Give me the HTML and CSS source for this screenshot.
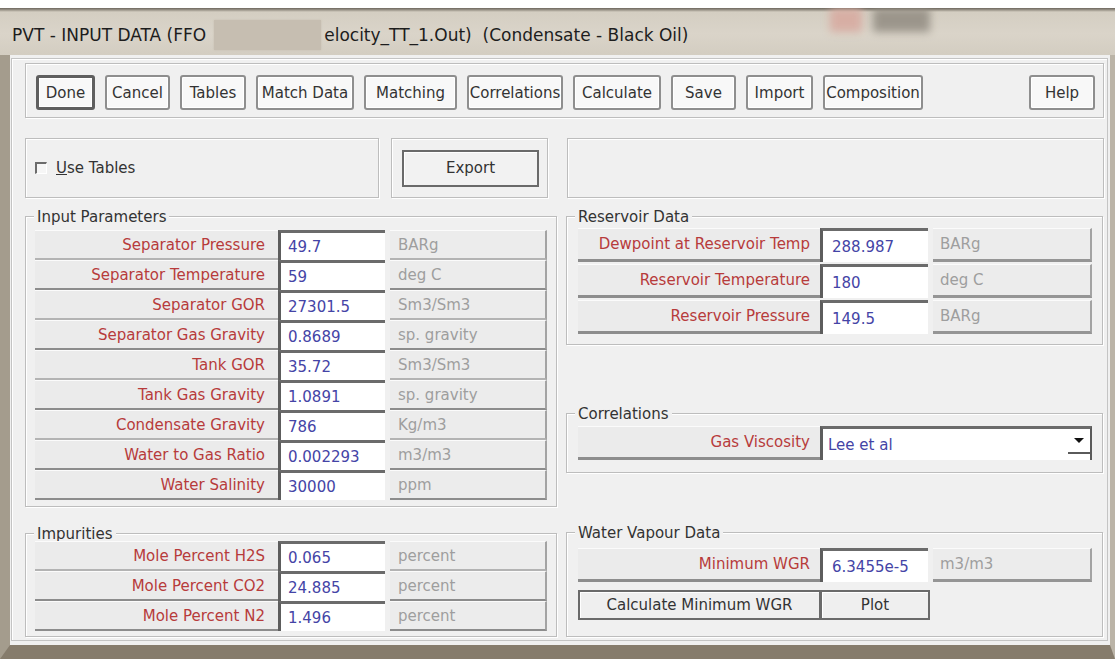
FILE: index.html
```html
<!DOCTYPE html>
<html lang="en">
<head>
<meta charset="utf-8">
<title>PVT - INPUT DATA</title>
<link rel="stylesheet" href="styles.css">
</head>
<body>
<div class="window">
  <div class="titlebar">
    <span class="title-text">PVT - INPUT DATA (FFO</span>
    <span class="title-mask"></span>
    <span class="title-text title-rest">elocity_TT_1.Out)&nbsp; (Condensate - Black Oil)</span>
    <span class="caption-btn caption-min"></span>
    <span class="caption-btn caption-max"></span>
  </div>

  <div class="client">
    <div class="frame">

      <div class="toolbar etched">
        <button class="tbtn tbtn-default">Done</button>
        <button class="tbtn">Cancel</button>
        <button class="tbtn">Tables</button>
        <button class="tbtn">Match Data</button>
        <button class="tbtn">Matching</button>
        <button class="tbtn">Correlations</button>
        <button class="tbtn">Calculate</button>
        <button class="tbtn">Save</button>
        <button class="tbtn">Import</button>
        <button class="tbtn">Composition</button>
        <span class="toolbar-fill"></span>
        <button class="tbtn">Help</button>
      </div>

      <div class="toprow">
        <div class="etched box-tables">
          <span class="checkbox"></span>
          <span class="check-label"><u>U</u>se Tables</span>
        </div>
        <div class="etched box-export">
          <button class="btn-export">Export</button>
        </div>
        <div class="etched box-blank"></div>
      </div>

      <div class="columns">
        <div class="col">
          <section class="group etched group-left group-input">
            <div class="legend">Input Parameters</div>
            <div class="rows">
              <div class="row"><div class="lbl">Separator Pressure</div><div class="val">49.7</div><div class="unit">BARg</div></div>
              <div class="row"><div class="lbl">Separator Temperature</div><div class="val">59</div><div class="unit">deg C</div></div>
              <div class="row"><div class="lbl">Separator GOR</div><div class="val">27301.5</div><div class="unit">Sm3/Sm3</div></div>
              <div class="row"><div class="lbl">Separator Gas Gravity</div><div class="val">0.8689</div><div class="unit">sp. gravity</div></div>
              <div class="row"><div class="lbl">Tank GOR</div><div class="val">35.72</div><div class="unit">Sm3/Sm3</div></div>
              <div class="row"><div class="lbl">Tank Gas Gravity</div><div class="val">1.0891</div><div class="unit">sp. gravity</div></div>
              <div class="row"><div class="lbl">Condensate Gravity</div><div class="val">786</div><div class="unit">Kg/m3</div></div>
              <div class="row"><div class="lbl">Water to Gas Ratio</div><div class="val">0.002293</div><div class="unit">m3/m3</div></div>
              <div class="row"><div class="lbl">Water Salinity</div><div class="val">30000</div><div class="unit">ppm</div></div>
            </div>
          </section>

          <section class="group etched group-left group-imp">
            <div class="legend">Impurities</div>
            <div class="rows">
              <div class="row"><div class="lbl">Mole Percent H2S</div><div class="val">0.065</div><div class="unit">percent</div></div>
              <div class="row"><div class="lbl">Mole Percent CO2</div><div class="val">24.885</div><div class="unit">percent</div></div>
              <div class="row"><div class="lbl">Mole Percent N2</div><div class="val">1.496</div><div class="unit">percent</div></div>
            </div>
          </section>
        </div>

        <div class="col">
          <section class="group etched group-right group-res">
            <div class="legend">Reservoir Data</div>
            <div class="rows rows-tall">
              <div class="row"><div class="lbl">Dewpoint at Reservoir Temp</div><div class="val">288.987</div><div class="unit">BARg</div></div>
              <div class="row"><div class="lbl">Reservoir Temperature</div><div class="val">180</div><div class="unit">deg C</div></div>
              <div class="row"><div class="lbl">Reservoir Pressure</div><div class="val">149.5</div><div class="unit">BARg</div></div>
            </div>
          </section>

          <section class="group etched group-right group-corr">
            <div class="legend">Correlations</div>
            <div class="row row-combo">
              <div class="lbl">Gas Viscosity</div>
              <div class="combo">
                <span class="combo-text">Lee et al</span>
                <span class="combo-btn"><span class="arrow"></span></span>
              </div>
            </div>
          </section>

          <section class="group etched group-right group-wv">
            <div class="legend">Water Vapour Data</div>
            <div class="rows rows-tall">
              <div class="row"><div class="lbl">Minimum WGR</div><div class="val">6.3455e-5</div><div class="unit">m3/m3</div></div>
            </div>
            <div class="wv-actions">
              <button class="pbtn">Calculate Minimum WGR</button>
              <button class="pbtn pbtn-plot">Plot</button>
            </div>
          </section>
        </div>
      </div>

    </div>
  </div>
</div>
</body>
</html>
```

FILE: styles.css
```css
* {
  box-sizing: border-box;
}

body {
  margin: 0;
  background: #ffffff;
  font-family: "DejaVu Sans", "Liberation Sans", sans-serif;
  font-size: 15px;
  color: #333333;
}

button {
  font: inherit;
  cursor: default;
}

.window {
  width: 1115px;
  padding-top: 8px;
}

/* ---------- caption bar ---------- */
.titlebar {
  height: 47px;
  display: flex;
  align-items: flex-start;
  padding-left: 12px;
  background: linear-gradient(#6d675d 0, #9c968b 2px, #d4cec2 4px, #dad4c9 55%, #d3cdc1 100%);
  color: #1d1d1d;
  font-size: 17px;
  overflow: hidden;
}

.title-text {
  margin-top: 17px;
  line-height: 20px;
  white-space: nowrap;
}

.title-mask {
  width: 107px;
  height: 30px;
  margin: 12px 3px 0 8px;
  background: #c6beb1;
  box-shadow: 0 0 2px #c6beb1;
}

.caption-btn {
  height: 24px;
  filter: blur(4px);
  opacity: 0.8;
}

.caption-min {
  width: 32px;
  margin-left: auto;
  background: #d8a69c;
}

.caption-max {
  width: 57px;
  margin-left: 11px;
  margin-right: 185px;
  background: #8d877d;
}

/* ---------- client area ---------- */
.client {
  height: 604px;
  display: flex;
  flex-direction: column;
  padding: 3px 2px 4px 1px;
  background: #f0f0f0;
  border-left: 10px solid #a49c8d;
  border-right: 5px solid #bbb4a7;
  border-bottom: 14px solid #867c6c;
}

.frame {
  flex: 1;
  padding: 4px 3px 0 13px;
  border: 1px solid #c4c4c4;
  box-shadow: inset 1px 1px 0 #ffffff;
}

.etched {
  border: 1px solid #bdbdbd;
  box-shadow: inset 1px 1px 0 #ffffff, 1px 1px 0 #ffffff;
}

/* ---------- command buttons ---------- */
.toolbar {
  height: 55px;
  display: grid;
  grid-template-columns: 59px 65px 66px 98px 93px 96px 88px 65px 67px 100px 1fr 66px;
  column-gap: 10px;
  align-items: start;
  padding: 11px 8px 0 10px;
}

.tbtn {
  height: 35px;
  padding: 0;
  border: 2px solid #8e8e8e;
  border-radius: 3px;
  background: #f8f8f8;
  box-shadow: inset 0 0 0 1px #ffffff;
  color: #333333;
  white-space: nowrap;
}

.tbtn-default {
  border: 3px solid #5f5f5f;
}

.toprow {
  display: flex;
  height: 60px;
  margin-top: 20px;
}

.box-tables {
  width: 354px;
  display: flex;
  align-items: center;
  padding-left: 9px;
  margin-right: 12px;
}

.checkbox {
  width: 12px;
  height: 12px;
  margin-right: 9px;
  border-top: 2px solid #6c6c6c;
  border-left: 2px solid #6c6c6c;
  border-bottom: 1px solid #ffffff;
  border-right: 1px solid #ffffff;
  background: #f6f6f6;
}

.check-label {
  color: #333333;
}

.box-export {
  width: 157px;
  display: flex;
  align-items: center;
  padding-left: 10px;
}

.btn-export {
  width: 137px;
  height: 37px;
  padding: 0;
  border: 2px solid #6a6a6a;
  background: #f2f2f2;
  box-shadow: inset 1px 1px 0 #ffffff;
  color: #333333;
}

.box-blank {
  width: 537px;
  margin-left: auto;
}

/* ---------- data groups ---------- */
.columns {
  display: grid;
  grid-template-columns: 532px 537px;
  column-gap: 9px;
  margin-top: 18px;
}

.col {
  display: flex;
  flex-direction: column;
}

.group-left {
  padding: 0 9px 6px 9px;
}

.group-right {
  padding: 0 10px 10px 11px;
}

.legend {
  width: max-content;
  height: 14px;
  line-height: 14px;
  margin-top: -7px;
  padding: 0 3px;
  background: #f0f0f0;
  color: #333333;
}

.group-left .legend {
  margin-left: -1px;
}

.group-right .legend {
  margin-left: -3px;
}

.group-input .rows {
  margin-top: 6px;
}

.group-imp {
  margin-top: 26px;
  padding-bottom: 5px;
}

.group-res .rows {
  margin-top: 4px;
}

.group-corr {
  margin-top: 68px;
  padding-bottom: 12px;
}

.group-wv {
  margin-top: 59px;
  padding-bottom: 16px;
}

.group-wv .rows {
  margin-top: 8px;
}

.rows {
  display: flex;
  flex-direction: column;
}

.rows-tall {
  gap: 2px;
}

.row {
  display: grid;
  height: 30px;
}

.group-left .row {
  grid-template-columns: 243px 107px 1fr;
}

.group-right .row {
  grid-template-columns: 242px 108px 1fr;
}

.rows-tall .row {
  height: 34px;
}

.lbl {
  display: flex;
  align-items: center;
  justify-content: flex-end;
  padding-right: 13px;
  background: #ebebeb;
  border-top: 1px solid #fbfbfb;
  border-bottom: 2px solid #b3b3b3;
  color: #b73b3b;
  white-space: nowrap;
}

.group-right .lbl {
  padding-right: 10px;
  border-bottom: 3px solid #8d8d8d;
}

.val {
  display: flex;
  align-items: center;
  padding-left: 7px;
  background: #ffffff;
  border-top: 3px solid #6b6b6b;
  border-left: 3px solid #5d5d5d;
  color: #4444a6;
}

.group-right .val {
  padding-left: 9px;
}

.unit {
  display: flex;
  align-items: center;
  margin-left: 5px;
  padding-left: 8px;
  background: #ececec;
  border-top: 1px solid #fbfbfb;
  border-bottom: 2px solid #b3b3b3;
  border-right: 2px solid #a3a3a3;
  color: #9e9e9e;
}

.group-right .unit {
  padding-left: 7px;
  border-bottom: 3px solid #959595;
}

.group-left .row:nth-child(even) .lbl,
.group-left .row:nth-child(even) .unit,
.group-left .row:last-child .lbl,
.group-left .row:last-child .unit {
  border-bottom-color: #8c8c8c;
}

/* combo box */
.group-right .row-combo {
  height: 34px;
  margin-top: 5px;
  grid-template-columns: 242px 1fr;
}

.combo {
  display: flex;
  align-items: flex-start;
  background: #ffffff;
  border-top: 3px solid #6b6b6b;
  border-left: 3px solid #5d5d5d;
  border-right: 2px solid #5a5a5a;
}

.combo-text {
  align-self: center;
  padding-left: 5px;
  color: #4444a6;
}

.combo-btn {
  width: 22px;
  height: 25px;
  margin-left: auto;
  display: flex;
  align-items: center;
  justify-content: center;
  border-bottom: 2px solid #5a5a5a;
}

.arrow {
  width: 0;
  height: 0;
  border-left: 5px solid transparent;
  border-right: 5px solid transparent;
  border-top: 5px solid #111111;
}

/* water vapour actions */
.wv-actions {
  display: grid;
  grid-template-columns: 243px 109px;
  height: 30px;
  margin-top: 8px;
}

.pbtn {
  padding: 0;
  border: 2px solid #6a6a6a;
  background: #efefef;
  box-shadow: inset 1px 1px 0 #ffffff;
  color: #333333;
  white-space: nowrap;
}

.pbtn-plot {
  border-left: 1px solid #6a6a6a;
}
```
